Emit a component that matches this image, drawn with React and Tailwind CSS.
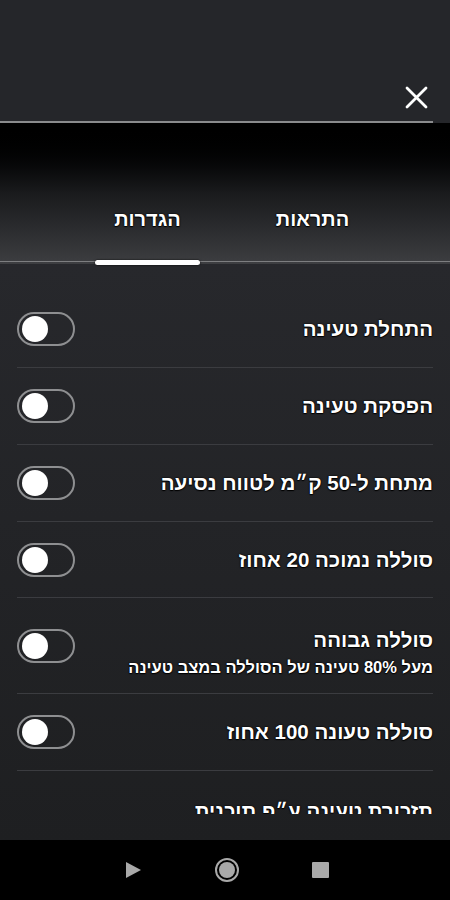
import React from "react";

const font = { fontFamily: '"Liberation Sans", "DejaVu Sans", Arial, sans-serif' };

function Toggle() {
  return (
    <div className="w-[58px] h-[34px] rounded-full border-2 border-[#8e8f91] flex items-center pl-[3px] shrink-0" dir="ltr">
      <div className="w-[26px] h-[26px] rounded-full bg-white" />
    </div>
  );
}

const shadow = "[text-shadow:0_1px_1px_#000,0_0_2px_#000,0_0_1px_#000]";

function Row({ title, subtitle, h = "h-[77px]" }) {
  return (
    <div className={`${h} flex items-center justify-between border-b border-[#3b3c40]`}>
      <div className={`flex flex-col items-start ${subtitle ? "pt-[12px]" : ""}`}>
        <div className={`text-white font-bold text-[20.5px] leading-[24px] ${shadow}`}>{title}</div>
        {subtitle && (
          <div className={`text-white font-bold text-[16.5px] leading-[18px] mt-[6px] ${shadow}`}>{subtitle}</div>
        )}
      </div>
      <Toggle />
    </div>
  );
}

export default function App() {
  return (
    <div dir="rtl" style={font} className="w-[450px] h-[900px] flex flex-col bg-[#25262a] overflow-hidden">
      {/* header */}
      <div className="h-[123px] shrink-0 flex flex-col">
        <div className="h-[122px] flex items-start justify-start pr-[22px] pt-[86px]">
          <svg width="23" height="23" viewBox="0 0 23 23" fill="none" stroke="white" strokeWidth="2.8" strokeLinecap="round">
            <path d="M2 2 L21 21 M21 2 L2 21" />
          </svg>
        </div>
        <div className="h-[2px] bg-[#8a8b8d] mr-[17px]" />
      </div>
      {/* tabs */}
      <div className="h-[141px] shrink-0 bg-gradient-to-b from-[#000000] via-[#1a1b1d] to-[#3d3e41] flex flex-col justify-end relative">
        <div className="flex pr-[55px] h-[54px]">
          <div className="w-[165px] flex justify-center items-start">
            <span className={`text-white font-bold text-[20px] leading-[24px] ${shadow}`}>התראות</span>
          </div>
          <div className="w-[165px] flex justify-center items-start">
            <span className={`text-white font-bold text-[20px] leading-[24px] ${shadow}`}>הגדרות</span>
          </div>
        </div>
        <div className="h-[1px] bg-[#7d7e80] mb-[2px]" />
        <div className="absolute bottom-[-1px] left-[95px] w-[105px] h-[5px] rounded-full bg-white shadow-[0_0_2px_#000]" />
      </div>
      {/* content */}
      <div className="flex-1 bg-gradient-to-b from-[#27282c] to-[#1e1f21] flex flex-col">
        <div className="h-[550px] overflow-hidden px-[17px] pt-[27px]">
          <Row title="התחלת טעינה" />
          <Row title="הפסקת טעינה" />
          <Row title="מתחת ל-50 ק״מ לטווח נסיעה" />
          <Row title="סוללה נמוכה 20 אחוז" h="h-[76px]" />
          <Row title="סוללה גבוהה" subtitle="מעל 80% טעינה של הסוללה במצב טעינה" h="h-[96px]" />
          <Row title="סוללה טעונה 100 אחוז" />
          <div className="pt-[28px] flex">
            <div className={`text-white font-bold text-[20.5px] leading-[24px] ${shadow}`}>תזכורת טעינה ע״פ תוכנית</div>
          </div>
        </div>
      </div>
      {/* nav bar */}
      <div className="h-[60px] shrink-0 bg-black flex items-center justify-center gap-[72px] pl-[4px]" dir="ltr">
        <svg width="17" height="18" viewBox="0 0 17 18"><path d="M1 1 L16 9 L1 17 Z" fill="#a9a9a9" /></svg>
        <svg width="26" height="26" viewBox="0 0 26 26">
          <circle cx="13" cy="13" r="11" fill="none" stroke="#a9a9a9" strokeWidth="2" />
          <circle cx="13" cy="13" r="8" fill="#a9a9a9" />
        </svg>
        <div className="w-[17px] h-[16px] bg-[#a9a9a9] rounded-[1px]" />
      </div>
    </div>
  );
}
